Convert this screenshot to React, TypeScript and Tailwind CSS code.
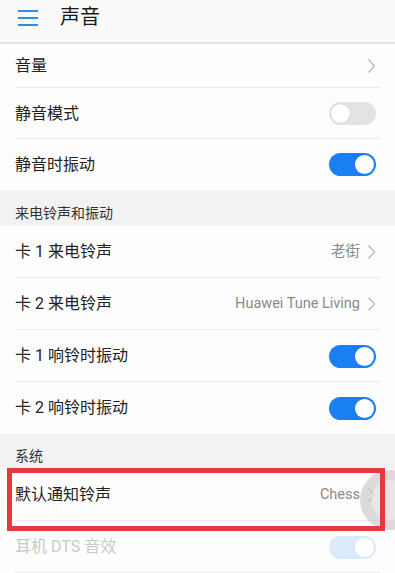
import React from 'react';

const font = { fontFamily: 'Roboto, "Noto Sans CJK SC", "Noto Sans", sans-serif' };

function Toggle({ on, faded = false }: { on: boolean; faded?: boolean }) {
  if (faded) {
    return (
      <div className="w-[47px] h-[23px] rounded-full bg-[#dcebfb] relative">
        <div className="absolute right-[2px] top-[2px] w-[19px] h-[19px] rounded-full bg-white" />
      </div>
    );
  }
  return on ? (
    <div className="w-[47px] h-[23px] rounded-full bg-[#1a7ff0] relative">
      <div className="absolute right-[2px] top-[2px] w-[19px] h-[19px] rounded-full bg-white" />
    </div>
  ) : (
    <div className="w-[47px] h-[23px] rounded-full bg-[#e3e3e3] relative">
      <div className="absolute left-[2px] top-[2px] w-[19px] h-[19px] rounded-full bg-white shadow-[0_0_1px_rgba(0,0,0,0.25)]" />
    </div>
  );
}

function Chevron() {
  return (
    <svg width="9" height="16" viewBox="0 0 9 16" className="shrink-0">
      <path d="M1.5 1.5 L7.5 8 L1.5 14.5" fill="none" stroke="#b8b8b8" strokeWidth="1.3" />
    </svg>
  );
}

function Row({
  title,
  value,
  toggle,
  chevron,
  divider = true,
  faded = false,
  h = 'h-[52px]',
}: {
  title: string;
  value?: string;
  toggle?: boolean;
  chevron?: boolean;
  divider?: boolean;
  faded?: boolean;
  h?: string;
}) {
  return (
    <div className={`relative ${h} bg-[#fdfdfd] flex items-center pl-[15px] pr-[19px]`}>
      <span className={`flex-1 text-[16px] ${faded ? 'text-[#c9c9c9]' : 'text-[#222]'}`}>{title}</span>
      {value && <span className="text-[14.5px] text-[#8a8a8a] mr-[7px]">{value}</span>}
      {chevron && <Chevron />}
      {toggle !== undefined && <Toggle on={toggle} faded={faded} />}
      {divider && <div className="absolute left-[15px] right-[15px] bottom-0 h-px bg-[#ececec]" />}
    </div>
  );
}

function Section({ title, h }: { title: string; h: string }) {
  return (
    <div className={`${h} bg-[#f2f2f2] flex items-end pl-[15px] pb-[2px]`}>
      <span className="text-[14px] text-[#333]">{title}</span>
    </div>
  );
}

export default function App() {
  return (
    <div className="relative w-[395px] h-[573px] overflow-hidden bg-[#fdfdfd]" style={font}>
      {/* Header */}
      <div className="h-[44px] bg-[#fafafa] flex items-center border-b-2 border-[#e4e4e4]">
        <div className="ml-[18px] w-[20px] flex flex-col gap-[5px] mt-[-6px]">
          <div className="h-[2px] bg-[#2f8fe0]" />
          <div className="h-[2px] bg-[#2f8fe0]" />
          <div className="h-[2px] bg-[#2f8fe0]" />
        </div>
        <span className="ml-[22px] text-[20px] text-[#1a1a1a] mt-[-8px]">声音</span>
      </div>

      <Row title="音量" chevron h="h-[44px]" />
      <Row title="静音模式" toggle={false} h="h-[51px]" />
      <Row title="静音时振动" toggle={true} divider={false} h="h-[51px]" />

      <Section title="来电铃声和振动" h="h-[36px]" />
      <Row title="卡 1 来电铃声" value="老街" chevron />
      <Row title="卡 2 来电铃声" value="Huawei Tune Living" chevron />
      <Row title="卡 1 响铃时振动" toggle={true} />
      <Row title="卡 2 响铃时振动" toggle={true} divider={false} />

      <Section title="系统" h="h-[35px]" />
      <Row title="默认通知铃声" value="Chess" chevron />
      <Row title="耳机 DTS 音效" toggle={true} faded />

      {/* floating assist ball */}
      <div className="absolute left-[360px] top-[470px] w-[62px] h-[60px] rounded-full bg-[#c4c4c4]/60 flex items-center justify-center">
        <div className="w-[40px] h-[40px] rounded-full bg-[#eeeeee]/60" />
      </div>

      {/* highlight box */}
      <div className="absolute left-[7px] top-[468px] w-[378px] h-[63px] border-[5px] border-[#e8383b]" />
    </div>
  );
}
